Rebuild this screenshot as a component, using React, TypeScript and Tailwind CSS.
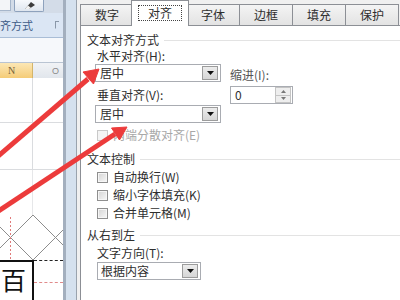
import React from "react";

function Tri() {
  return (
    <svg width="7" height="4" viewBox="0 0 7 4">
      <path d="M0 0h7L3.5 4z" fill="#111" />
    </svg>
  );
}

function DropBtn() {
  return (
    <div className="mr-[2px] flex h-[14px] w-[16px] items-center justify-center border border-[#9c9c9c] bg-gradient-to-b from-[#ececec] to-[#d6d6d6]">
      <Tri />
    </div>
  );
}

function Check({ disabled, label }: { disabled?: boolean; label: string }) {
  return (
    <div className="ml-[10px] flex h-[14px] items-center">
      <span
        className={
          disabled
            ? "h-[11px] w-[11px] border border-[#c9c9c9] bg-[#f4f4f4]"
            : "h-[11px] w-[11px] border border-[#8f8f8f] bg-gradient-to-br from-[#d4d4d4] to-[#f8f8f8] shadow-[inset_0_0_0_1px_#f6f6f6]"
        }
      />
      <span className={disabled ? "ml-[5px] text-[#a8a8a8]" : "ml-[5px]"}>{label}</span>
    </div>
  );
}

function GroupTitle({ text, className }: { text: string; className: string }) {
  return (
    <div className={"flex h-[14px] items-center " + className}>
      <span>{text}</span>
      <span className="ml-[5px] h-px flex-1 bg-[#e3e3e3]" />
    </div>
  );
}

function ExcelBg() {
  return (
    <div className="flex h-full w-[63px] shrink-0 flex-col overflow-hidden">
      {/* quick toolbar */}
      <div className="flex h-[13px] items-start bg-[#d3dce8]">
        <div className="h-[11px] w-[11px] border-r border-b border-[#a6b6cb] bg-[#f3f5f8]" />
        <div className="ml-[3px] flex h-[12px] w-[30px] items-center justify-center rounded-b-[2px] border border-t-0 border-[#8ea2bd] bg-gradient-to-b from-[#f7f9fc] to-[#dfe6ef]">
          <svg width="14" height="9" viewBox="0 0 14 9">
            <path d="M3 8 L9 1 L13 4 L7 8 Z" fill="#3d3d3d" />
            <path d="M3 8 L6 4.5 L9 7 L7 8 Z" fill="#f2f2f2" />
          </svg>
        </div>
      </div>
      {/* ribbon group */}
      <div className="flex h-[24px] items-center bg-[#dbe6f4]">
        <span className="whitespace-nowrap text-[11px] leading-[12px] text-[#3e5c88]">齐方式</span>
        <svg className="ml-auto mr-[3px]" width="5" height="8" viewBox="0 0 5 8">
          <path d="M0.5 0 V7.5 M0.5 0.5 H4" stroke="#8a97a8" strokeWidth="1" fill="none" />
        </svg>
      </div>
      <div className="h-px bg-[#a9bdd6]" />
      <div className="h-[24px] bg-[#f6f8fb]" />
      {/* column headers */}
      <div className="flex h-[16px] border-t border-[#b9c4d2]">
        <div className="flex w-[33px] items-center border-r border-[#d4b56a] bg-gradient-to-b from-[#fce7b4] to-[#f5cc77] pl-[8px] font-['Liberation_Serif',serif] text-[10px] leading-[10px] text-[#75623a]">
          N
        </div>
        <div className="flex flex-1 items-center bg-gradient-to-b from-[#f1f3f6] to-[#e1e6ec] pl-[19px] font-['Liberation_Sans',sans-serif] text-[9px] leading-[10px] text-[#8a8a8a]">
          O
        </div>
      </div>
      {/* rows */}
      <div className="flex h-[45px] border-b border-[#dadcdf] bg-white">
        <div className="w-[33px] border-r border-[#dadcdf]" />
      </div>
      <div className="flex h-[47px] border-b border-[#dadcdf] bg-white">
        <div className="w-[33px] border-r border-[#dadcdf]" />
      </div>
      <div className="flex h-[45px] bg-white">
        <div className="w-[33px] border-r border-[#e6e7e9]" />
      </div>
      <div className="h-[45px] bg-white">
        <svg width="63" height="45" viewBox="0 0 63 45">
          <path d="M-12 0 L33 45 M-12 45 L33 0 M33 0 L78 45 M33 45 L78 0" stroke="#8d8d8d" strokeWidth="1" fill="none" />
          <path d="M10.5 2 V45" stroke="#e07a7a" strokeWidth="1" strokeDasharray="2 2" />
        </svg>
      </div>
      <div className="flex flex-1 bg-white">
        <div className="flex w-[34px] items-start overflow-hidden border-t-2 border-r-2 border-[#111]">
          <span className="ml-[1px] text-[25px] leading-[34px] text-[#111]">百</span>
        </div>
        <div className="flex flex-1 flex-col">
          <div className="h-0 border-t border-dashed border-[#222]" />
          <div className="mt-[21px] h-0 border-t border-dashed border-[#e08a8a]" />
        </div>
      </div>
    </div>
  );
}

function Tab({ label, selected }: { label: string; selected?: boolean }) {
  if (selected) {
    return (
      <div className="relative z-10 -mb-px -ml-[3px] -mr-[2px] flex h-[26px] w-[58px] items-start justify-center border border-b-0 border-[#8c8f95] bg-white pt-[4px]">
        <span className="flex h-[16px] items-center border border-dotted border-[#444] px-[9px]">{label}</span>
      </div>
    );
  }
  return (
    <div className="-ml-px flex h-[21px] w-[54px] items-center justify-center border border-b-0 border-[#8c8f95] bg-gradient-to-b from-[#f4f4f4] to-[#e3e3e3] first:ml-0">
      {label}
    </div>
  );
}

function Dialog() {
  return (
    <div className="flex h-full flex-1 flex-col bg-[#f0f0f0] pl-[3px]">
      <div className="flex h-[25px] items-end">
        <Tab label="数字" />
        <Tab label="对齐" selected />
        <Tab label="字体" />
        <Tab label="边框" />
        <Tab label="填充" />
        <Tab label="保护" />
      </div>
      <div className="flex flex-1 flex-col border-l border-t border-[#8c8f95] bg-white pl-[6px]">
        <GroupTitle text="文本对齐方式" className="mt-[7px]" />
        <div className="mt-[3px] flex">
          <div className="ml-[8px] flex w-[126px] flex-col">
            <span className="ml-[2px] h-[12px] leading-[12px]">水平对齐(H):</span>
            <div className="mt-[2px] flex h-[18px] items-center justify-between border border-[#a9acb2] bg-white pl-[4px]">
              <span>居中</span>
              <DropBtn />
            </div>
            <span className="ml-[2px] mt-[7px] h-[12px] leading-[12px]">垂直对齐(V):</span>
            <div className="mt-[4px] flex h-[18px] items-center justify-between border border-[#a9acb2] bg-white pl-[4px]">
              <span>居中</span>
              <DropBtn />
            </div>
          </div>
          <div className="ml-[9px] flex flex-col">
            <span className="mt-[18px] h-[13px] leading-[13px] text-[#555]">缩进(I):</span>
            <div className="mt-[5px] flex h-[18px] w-[63px] items-center justify-between border border-[#a9acb2] bg-white pl-[4px]">
              <span>0</span>
              <div className="mr-px flex h-[16px] w-[16px] flex-col border border-[#c4c4c4] bg-[#eeeeee]">
                <div className="flex flex-1 items-center justify-center border-b border-[#c4c4c4]">
                  <svg width="5" height="3" viewBox="0 0 5 3"><path d="M0 3h5L2.5 0z" fill="#777" /></svg>
                </div>
                <div className="flex flex-1 items-center justify-center">
                  <svg width="5" height="3" viewBox="0 0 5 3"><path d="M0 0h5L2.5 3z" fill="#777" /></svg>
                </div>
              </div>
            </div>
          </div>
        </div>
        <div className="mt-[5px]">
          <Check disabled label="两端分散对齐(E)" />
        </div>
        <GroupTitle text="文本控制" className="mt-[10px]" />
        <div className="mt-[4px] flex flex-col gap-[4px]">
          <Check label="自动换行(W)" />
          <Check label="缩小字体填充(K)" />
          <Check label="合并单元格(M)" />
        </div>
        <GroupTitle text="从右到左" className="mt-[8px]" />
        <span className="ml-[10px] mt-[4px] h-[14px]">文字方向(T):</span>
        <div className="ml-[10px] mt-[2px] flex h-[18px] w-[104px] items-center justify-between border border-[#a9acb2] bg-white pl-[3px]">
          <span>根据内容</span>
          <DropBtn />
        </div>
      </div>
    </div>
  );
}

function Arrows() {
  return (
    <svg className="pointer-events-none absolute left-0 top-0" width="400" height="300" viewBox="0 0 400 300">
      <g fill="#ec3b3b" stroke="#ec3b3b">
        <line x1="-4" y1="158" x2="88" y2="79" strokeWidth="5" />
        <path d="M99 69 L93.5 84 L83 72 Z" strokeWidth="1" />
        <line x1="-3" y1="212" x2="115" y2="134" strokeWidth="5" />
        <path d="M127 127 L119.5 140 L111.5 128 Z" strokeWidth="1" />
      </g>
    </svg>
  );
}

export default function App() {
  return (
    <div className="relative flex h-[300px] w-[400px] overflow-hidden bg-white font-['Noto_Sans_CJK_SC',sans-serif] text-[12px] leading-[14px] text-[#2e2e2e]">
      <ExcelBg />
      <div className="h-full w-[14px] shrink-0 border-l-[3px] border-r border-l-[#a3afbe] border-r-[#9aa3ad] bg-[#d5e1ee]" />
      <Dialog />
      <Arrows />
    </div>
  );
}
